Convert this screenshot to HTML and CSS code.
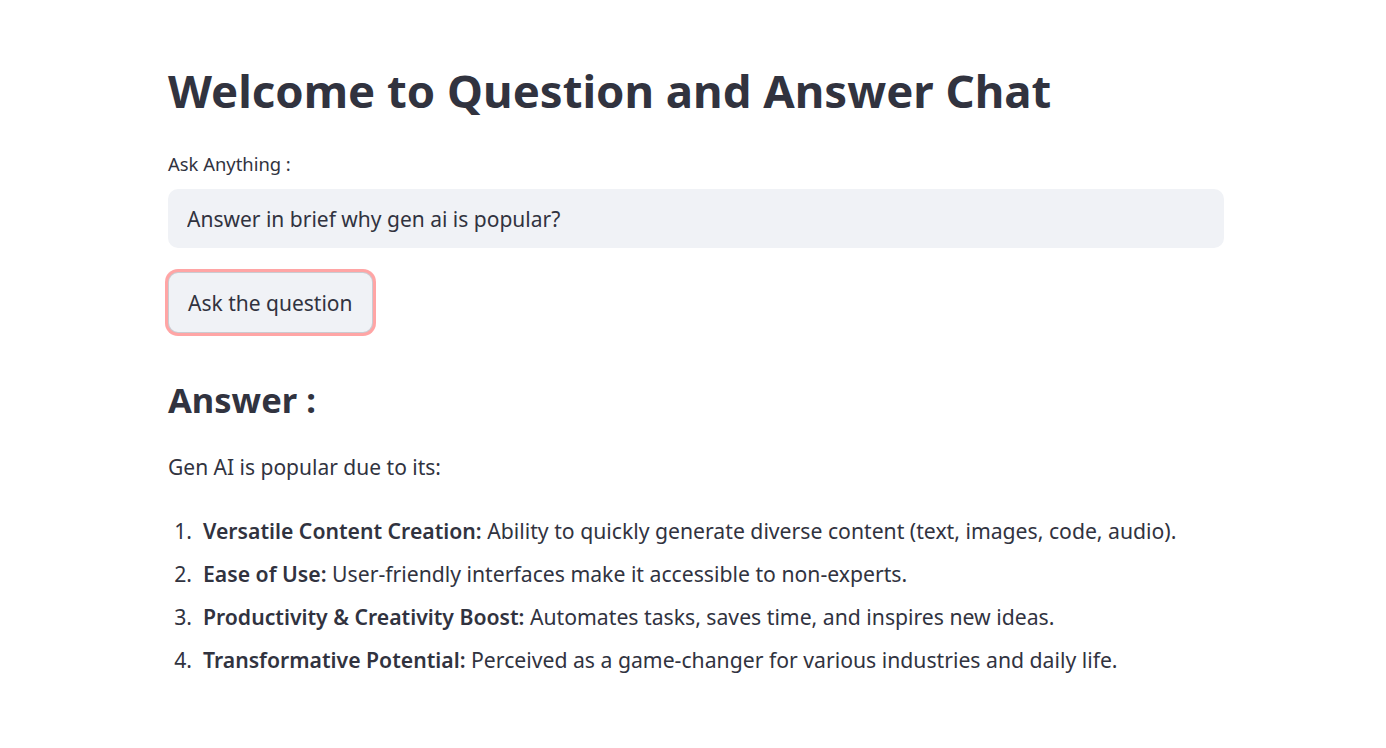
FILE: index.html
```html
<!DOCTYPE html>
<html lang="en">
<head>
<meta charset="utf-8">
<title>Question and Answer Chat</title>
<link rel="stylesheet" href="styles.css">
</head>
<body>
<main class="app">
  <h1 class="title">Welcome to Question and Answer Chat</h1>
  <label class="label" for="q">Ask Anything :</label>
  <div class="input-wrap">
    <input id="q" class="input" type="text" value="Answer in brief why gen ai is popular?">
  </div>
  <button class="btn" type="button">Ask the question</button>
  <h3 class="subtitle">Answer :</h3>
  <p class="para">Gen AI is popular due to its:</p>
  <ol class="list">
    <li><strong>Versatile Content Creation:</strong> Ability to quickly generate diverse content (text, images, code, audio).</li>
    <li><strong>Ease of Use:</strong> User-friendly interfaces make it accessible to non-experts.</li>
    <li><strong>Productivity &amp; Creativity Boost:</strong> Automates tasks, saves time, and inspires new ideas.</li>
    <li><strong>Transformative Potential:</strong> Perceived as a game-changer for various industries and daily life.</li>
  </ol>
</main>
</body>
</html>
```

FILE: styles.css
```css
* { box-sizing: border-box; }
html, body { margin: 0; padding: 0; background: #ffffff; }
body {
  font-family: "Noto Sans", "Open Sans", sans-serif;
  color: #31333F;
}
.app {
  width: 1056px;
  margin-left: 168px;
  padding-top: 55px;
  display: flex;
  flex-direction: column;
  align-items: flex-start;
}
.title {
  margin: 0;
  font-size: 45.5px;
  line-height: 70px;
  font-weight: 700;
}
.label {
  margin-top: 27px;
  font-size: 18.4px;
  line-height: 24px;
}
.input-wrap {
  margin-top: 13px;
  width: 100%;
}
.input {
  display: block;
  width: 100%;
  height: 59px;
  border: none;
  border-radius: 10px;
  background: #F0F2F6;
  padding: 0 19px;
  font-family: inherit;
  font-size: 21px;
  color: #31333F;
  outline: none;
}
.btn {
  margin-top: 24px;
  height: 61px;
  padding: 0 19px;
  border: 1px solid rgba(49, 51, 63, 0.2);
  border-radius: 10px;
  background: #F0F2F6;
  box-shadow: 0 0 0 3px rgba(255, 75, 75, 0.5);
  font-family: inherit;
  font-size: 21px;
  color: #31333F;
}
.subtitle {
  margin: 45px 0 0;
  font-size: 34.5px;
  line-height: 44px;
  font-weight: 700;
}
.para {
  margin: 29px 0 0;
  font-size: 21px;
  line-height: 32px;
}
.list {
  margin: 32px 0 0;
  padding-left: 35px;
  font-size: 21.2px;
  line-height: 32px;
}
.list li { margin-bottom: 11px; }
.list li::marker { content: counter(list-item) ".\00a0\00a0"; }
.list strong { font-weight: 600; }
```
